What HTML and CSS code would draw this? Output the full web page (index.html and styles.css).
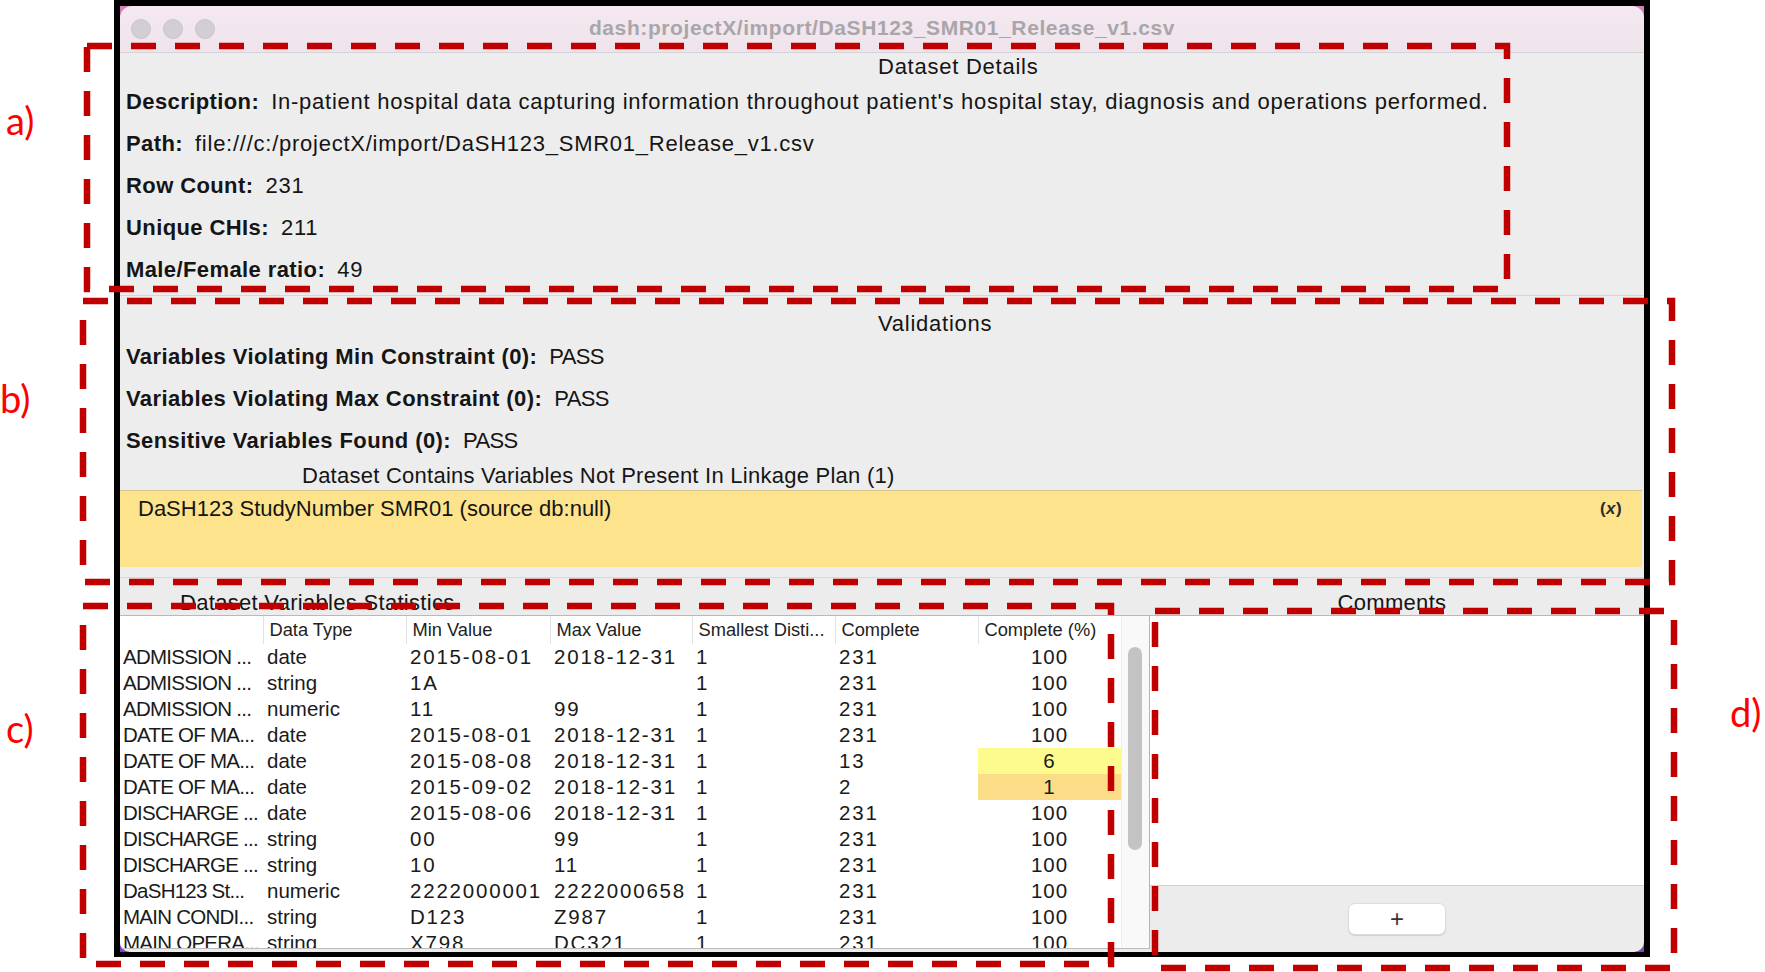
FILE: index.html
```html
<!DOCTYPE html>
<html lang="en">
<head>
<meta charset="utf-8">
<title>dash:projectX/import/DaSH123_SMR01_Release_v1.csv</title>
<link rel="stylesheet" href="styles.css">
</head>
<body>
<div class="figure">
  <div class="window">
    <div class="titlebar">
      <div class="lights">
        <span class="light"></span><span class="light"></span><span class="light"></span>
      </div>
      <div class="title">dash:projectX/import/DaSH123_SMR01_Release_v1.csv</div>
      <div></div>
    </div>

    <section class="panel details">
      <div class="panel-title">Dataset Details</div>
      <div class="field"><b>Description:</b><span>In-patient hospital data capturing information throughout patient's hospital stay, diagnosis and operations performed.</span></div>
      <div class="field"><b>Path:</b><span>file:///c:/projectX/import/DaSH123_SMR01_Release_v1.csv</span></div>
      <div class="field"><b>Row Count:</b><span>231</span></div>
      <div class="field"><b>Unique CHIs:</b><span>211</span></div>
      <div class="field"><b>Male/Female ratio:</b><span>49</span></div>
    </section>

    <section class="panel validations">
      <div class="panel-title">Validations</div>
      <div class="field"><b>Variables Violating Min Constraint (0):</b><span class="status">PASS</span></div>
      <div class="field"><b>Variables Violating Max Constraint (0):</b><span class="status">PASS</span></div>
      <div class="field"><b>Sensitive Variables Found (0):</b><span class="status">PASS</span></div>
      <div class="sub-title">Dataset Contains Variables Not Present In Linkage Plan (1)</div>
      <div class="warn-list">
        <div class="warn-item"><span>DaSH123 StudyNumber SMR01 (source db:null)</span><b class="dismiss">(<i>x</i>)</b></div>
      </div>
    </section>

    <div class="lower">
      <section class="stats">
        <div class="group-title stats-title">Dataset Variables Statistics</div>
        <div class="table-box">
          <div class="table-clip">
            <table class="grid">
              <colgroup>
                <col class="c-name"><col class="c-type"><col class="c-min"><col class="c-max"><col class="c-dist"><col class="c-comp"><col class="c-pct">
              </colgroup>
              <thead>
                <tr><th></th><th>Data Type</th><th>Min Value</th><th>Max Value</th><th>Smallest Disti...</th><th>Complete</th><th>Complete (%)</th></tr>
              </thead>
              <tbody>
                <tr><td class="name">ADMISSION ...</td><td>date</td><td class="num">2015-08-01</td><td class="num">2018-12-31</td><td class="num">1</td><td class="num">231</td><td class="pct">100</td></tr>
                <tr><td class="name">ADMISSION ...</td><td>string</td><td class="num">1A</td><td class="num"></td><td class="num">1</td><td class="num">231</td><td class="pct">100</td></tr>
                <tr><td class="name">ADMISSION ...</td><td>numeric</td><td class="num">11</td><td class="num">99</td><td class="num">1</td><td class="num">231</td><td class="pct">100</td></tr>
                <tr><td class="name">DATE OF MA...</td><td>date</td><td class="num">2015-08-01</td><td class="num">2018-12-31</td><td class="num">1</td><td class="num">231</td><td class="pct">100</td></tr>
                <tr><td class="name">DATE OF MA...</td><td>date</td><td class="num">2015-08-08</td><td class="num">2018-12-31</td><td class="num">1</td><td class="num">13</td><td class="pct low">6</td></tr>
                <tr><td class="name">DATE OF MA...</td><td>date</td><td class="num">2015-09-02</td><td class="num">2018-12-31</td><td class="num">1</td><td class="num">2</td><td class="pct lower-pct">1</td></tr>
                <tr><td class="name">DISCHARGE ...</td><td>date</td><td class="num">2015-08-06</td><td class="num">2018-12-31</td><td class="num">1</td><td class="num">231</td><td class="pct">100</td></tr>
                <tr><td class="name">DISCHARGE ...</td><td>string</td><td class="num">00</td><td class="num">99</td><td class="num">1</td><td class="num">231</td><td class="pct">100</td></tr>
                <tr><td class="name">DISCHARGE ...</td><td>string</td><td class="num">10</td><td class="num">11</td><td class="num">1</td><td class="num">231</td><td class="pct">100</td></tr>
                <tr><td class="name">DaSH123 St...</td><td>numeric</td><td class="num">2222000001</td><td class="num">2222000658</td><td class="num">1</td><td class="num">231</td><td class="pct">100</td></tr>
                <tr><td class="name">MAIN CONDI...</td><td>string</td><td class="num">D123</td><td class="num">Z987</td><td class="num">1</td><td class="num">231</td><td class="pct">100</td></tr>
                <tr><td class="name">MAIN OPERA...</td><td>string</td><td class="num">X798</td><td class="num">DC321</td><td class="num">1</td><td class="num">231</td><td class="pct">100</td></tr>
              </tbody>
            </table>
          </div>
          <div class="scrollbar"><div class="thumb"></div></div>
        </div>
      </section>

      <section class="comments">
        <div class="group-title comments-title">Comments</div>
        <div class="comment-area"></div>
        <div class="comment-footer"><button class="add-btn" type="button">+</button></div>
      </section>
    </div>
  </div>

  <svg class="marks" width="1765" height="972" viewBox="0 0 1765 972">
    <rect x="87" y="46" width="1420" height="243"/>
    <rect x="83" y="301" width="1589" height="281"/>
    <rect x="83" y="606" width="1028" height="358"/>
    <rect x="1155" y="611" width="519" height="357"/>
  </svg>
  <div class="tag tag-a">a)</div>
  <div class="tag tag-b">b)</div>
  <div class="tag tag-c">c)</div>
  <div class="tag tag-d">d)</div>
</div>
</body>
</html>
```

FILE: styles.css
```css
* {
  box-sizing: border-box;
}

html,
body {
  margin: 0;
  padding: 0;
  background: #ffffff;
}

body {
  width: 1765px;
  height: 972px;
  overflow: hidden;
  font-family: "Liberation Sans", Arial, sans-serif;
  color: #151515;
}

.figure {
  position: relative;
  width: 1765px;
  height: 972px;
}

/* ---------- window frame ---------- */
.window {
  margin-left: 114px;
  width: 1536px;
  height: 957px;
  border: solid #000000;
  border-width: 6px 6px 5px 6px;
  background: linear-gradient(180deg, #d77fb8 0%, #b06ec6 50%, #7d46c6 100%);
  display: flex;
  flex-direction: column;
}

.titlebar {
  height: 47px;
  flex: none;
  display: grid;
  grid-template-columns: 1fr auto 1fr;
  align-items: center;
  background: linear-gradient(180deg, #f4e8f1 0%, #efe3ec 100%);
  border-bottom: 1px solid #dad0d8;
  border-radius: 12px 12px 0 0;
}

.lights {
  display: flex;
  gap: 12px;
  padding-left: 11px;
}

.light {
  width: 20px;
  height: 20px;
  border-radius: 50%;
  background: #d3ced3;
  border: 1px solid #c9c4c9;
}

.title {
  font-size: 21px;
  font-weight: bold;
  letter-spacing: 0.6px;
  color: #a9a6a9;
  padding-bottom: 2px;
}

/* ---------- upper panels ---------- */
.panel {
  flex: none;
  background: #ededed;
  font-size: 22px;
  letter-spacing: 0.75px;
}

.panel b {
  letter-spacing: 0.4px;
}

.panel-title {
  padding-left: 758px;
}

.field {
  padding-left: 6px;
  height: 42px;
  line-height: 42px;
  white-space: nowrap;
}

.field b {
  margin-right: 12px;
}

.field .status {
  letter-spacing: -0.6px;
}

.details {
  height: 243px;
  border-bottom: 1px solid #d6d6d6;
}

.details .panel-title {
  line-height: 28px;
}

.validations {
  height: 282px;
  padding-top: 16px;
  border-bottom: 1px solid #d9d9d9;
}

.validations .panel-title {
  line-height: 24px;
}

.sub-title {
  line-height: 28px;
  padding-left: 182px;
  letter-spacing: 0.25px;
}

.warn-list {
  height: 77px;
  margin-bottom: 10px;
  background: #fde48c;
  border-top: 1px solid #d5c78f;
  margin-right: 2px;
}

.warn-item {
  display: flex;
  justify-content: space-between;
  align-items: center;
  height: 36px;
  padding: 0 20px 0 18px;
  letter-spacing: 0;
}

.dismiss {
  font-size: 17px;
  letter-spacing: 0;
  color: #2a2a2a;
}

/* ---------- lower area ---------- */
.lower {
  flex: 1;
  display: flex;
  background: #ececec;
  border-radius: 0 0 10px 10px;
  overflow: hidden;
}

.group-title {
  height: 37px;
  padding-top: 12px;
  line-height: 25px;
  font-size: 22px;
  letter-spacing: 0.3px;
  flex: none;
}

.stats {
  width: 1030px;
  flex: none;
  display: flex;
  flex-direction: column;
}

.stats-title {
  padding-left: 60px;
}

.table-box {
  height: 334px;
  display: flex;
  background: #ffffff;
  border-top: 1px solid #b9b9b9;
  border-right: 1px solid #b4b4b4;
  border-bottom: 1px solid #bdbdbd;
}

.table-clip {
  width: 1001px;
  height: 332px;
  overflow: hidden;
}

.grid {
  border-collapse: collapse;
  table-layout: fixed;
  width: 1001px;
}

.c-name { width: 143px; }
.c-type { width: 143px; }
.c-min { width: 144px; }
.c-max { width: 142px; }
.c-dist { width: 143px; }
.c-comp { width: 143px; }
.c-pct { width: 143px; }

.grid th {
  height: 28px;
  padding: 0 0 0 6px;
  font-size: 18.3px;
  font-weight: normal;
  text-align: left;
  color: #222222;
  white-space: nowrap;
  overflow: hidden;
  border-left: 1px solid #e2e2e2;
}

.grid th:first-child {
  border-left: none;
}

.grid td {
  height: 26px;
  padding: 0 0 0 4px;
  font-size: 20.5px;
  line-height: 26px;
  white-space: nowrap;
  overflow: hidden;
  color: #1a1a1a;
}

.grid td.name {
  padding-left: 3px;
  letter-spacing: -0.75px;
}

.grid td.num {
  letter-spacing: 1.8px;
}

.grid td.pct {
  text-align: center;
  padding: 0;
  letter-spacing: 1px;
}

.grid td.low {
  background: #fdfb8e;
}

.grid td.lower-pct {
  background: #fbdd88;
}

.scrollbar {
  width: 28px;
  background: #f9f9f9;
  border-left: 1px solid #ededed;
  padding: 31px 0 0 6px;
}

.thumb {
  width: 14px;
  height: 203px;
  border-radius: 7px;
  background: #c3c3c3;
}

.comments {
  flex: 1;
  display: flex;
  flex-direction: column;
}

.comments-title {
  text-align: center;
  padding-right: 10px;
}

.comment-area {
  height: 271px;
  background: #ffffff;
  border-top: 1px solid #b9b9b9;
  border-bottom: 1px solid #d2d2d2;
}

.comment-footer {
  flex: 1;
  display: flex;
  align-items: center;
  justify-content: center;
  padding-bottom: 1px;
}

.add-btn {
  width: 98px;
  height: 32px;
  border: 1px solid #dcdcdc;
  border-radius: 7px;
  background: #ffffff;
  box-shadow: 0 1px 1px rgba(0, 0, 0, 0.12);
  font-family: "Liberation Sans", Arial, sans-serif;
  font-size: 24px;
  line-height: 28px;
  color: #333333;
  padding: 0;
}

/* ---------- figure annotations ---------- */
.marks {
  position: absolute;
  left: 0;
  top: 0;
  pointer-events: none;
}

.marks rect {
  fill: none;
  stroke: #c00000;
  stroke-width: 6.5;
  stroke-dasharray: 25 19;
}

.tag {
  position: absolute;
  font-family: Lato, "Open Sans", sans-serif;
  font-size: 38px;
  line-height: 40px;
  color: #ff0000;
}

.tag-a { left: 6px; top: 100px; }
.tag-b { left: 0; top: 378px; }
.tag-c { left: 6px; top: 708px; }
.tag-d { left: 1730px; top: 692px; }
```
